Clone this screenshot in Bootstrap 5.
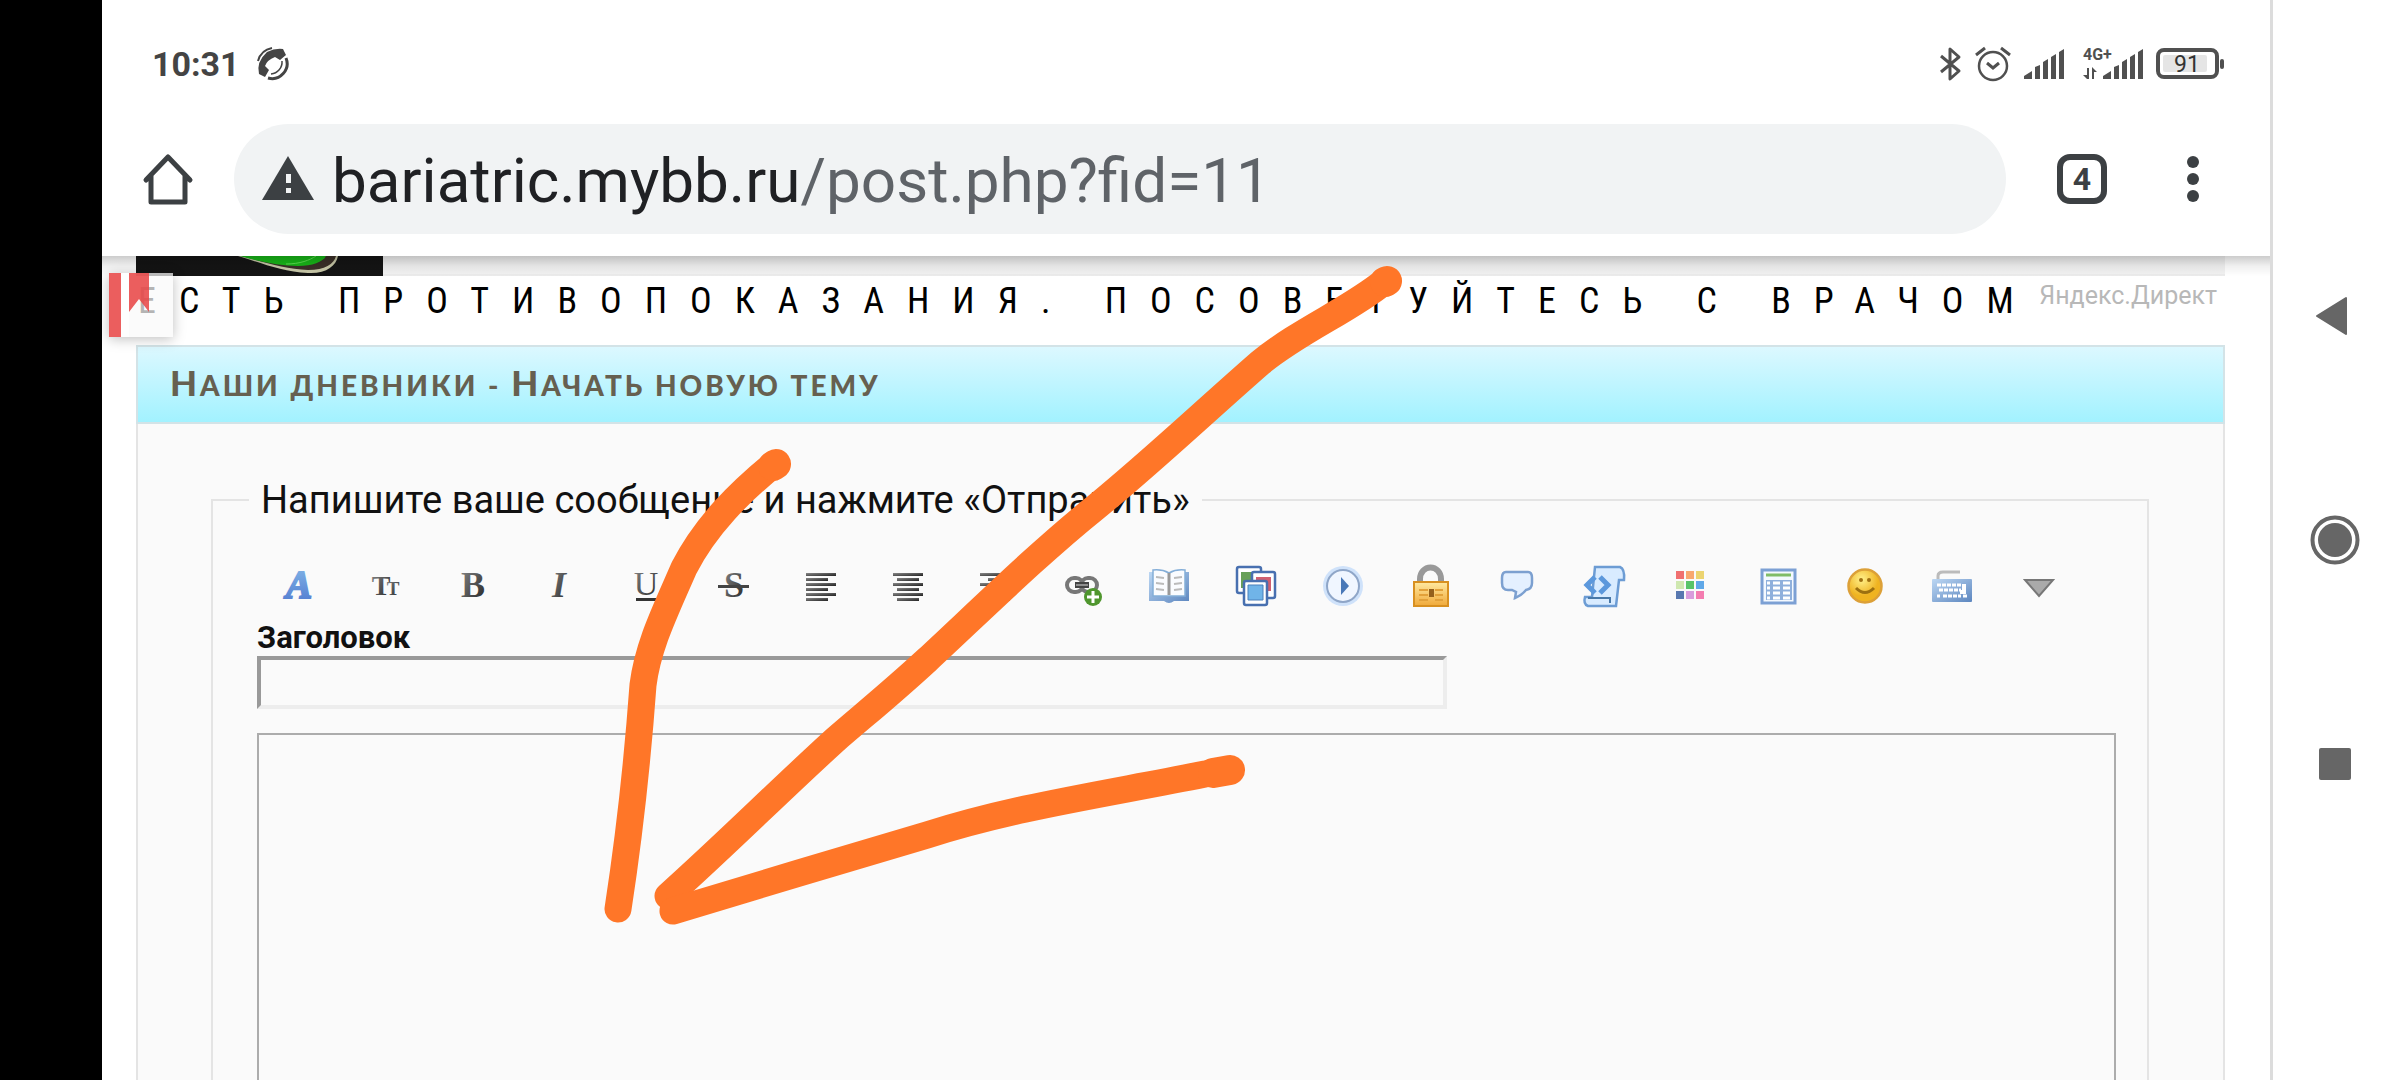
<!DOCTYPE html>
<html lang="ru">
<head>
<meta charset="utf-8">
<meta name="viewport" content="width=device-width, initial-scale=1">
<title>Наши дневники - Начать новую тему</title>
<link href="https://cdn.jsdelivr.net/npm/bootstrap@5.3.0/dist/css/bootstrap.min.css" rel="stylesheet">
<style>
body{font-family:Roboto,sans-serif;color:#111;background:#fff;line-height:1.2}
svg{display:block;flex:none}
button{border:0;background:none;padding:0;color:inherit}
.cutout{width:102px;background:#000}
.sysnav{width:130px;border-left:3px solid #dcdcdc;background:#fff;color:#666;padding-right:4px}
.sysnav button{height:224px}
.statusbar{height:124px;padding:4px 44px 0 50px;color:#444}
.status-icons{gap:13px}
.clock{font-size:34px;font-weight:700}
.omnibar{padding:0 67px 22px 40px;color:#3c4043}
.address{height:110px;background:#f1f3f4;border-radius:55px;margin:0 51px 0 40px;padding:5px 28px 0}
.site-url{font-size:62px;color:#5f6368;text-decoration:none;white-space:nowrap;margin-left:18px}
.site-url b{font-weight:400;color:#202124}
.tabcount{width:50px;height:50px;border:6px solid #3c4043;border-radius:13px;font-size:32px;font-weight:700;line-height:38px}
.forum{padding:0 45px 0 34px}
.topshade{height:20px;background:linear-gradient(rgba(0,0,0,.2),rgba(0,0,0,.06) 50%,rgba(0,0,0,0));left:0;right:0;top:0}
.banner{height:20px;background:#f2f2f2;border-bottom:2px solid #ebebeb}
.advert{height:69px;padding:0 8px 0 2px;color:#000}
.warn{font-family:"Liberation Sans Narrow","Roboto Condensed",Roboto,sans-serif;font-size:36px;line-height:50px;letter-spacing:23px;white-space:nowrap}
.direct{font-size:25px;line-height:40px;color:#b8b8b8}
.saver{left:7px;top:17px;width:64px;height:64px;background:rgba(250,250,250,.72);box-shadow:0 2px 12px rgba(0,0,0,.25)}
.forum-head{height:79px;border:2px solid #d3e3e7;background:linear-gradient(#dcf8ff,#a2f2ff);padding:0 32px 6px;font-family:Lato,sans-serif;font-size:28px;font-weight:900;letter-spacing:3px;text-transform:uppercase;color:#666050;margin:0}
.forum-head span{font-size:35px}
.forum-body{background:#fafafa;border:2px solid #e4e4e4;border-top:0;padding:52px 74px 49px 73px}
fieldset.post{border:2px solid #e4e4e4;padding:27px 31px 80px 44px}
.post legend{float:none;width:auto;font-size:38px;line-height:48px;padding:0 12px;margin:0 0 9px -8px}
.tools{margin:0 0 8px -2px}
.tools button{width:87px;height:52px}
.subject{font-size:31px;font-weight:700;line-height:36px}
.subject-box{width:64%;height:53px;border:4px solid;border-color:#999 #ededed #ededed #999;background:#fafafa;padding:0 8px;font-size:30px}
.message{height:520px;border:2px solid #acacac;background:#fafafa;margin-top:24px;padding:8px;font-size:30px;resize:none}
.scribble{left:0;top:0;pointer-events:none}
</style>
<script src="https://cdn.jsdelivr.net/npm/bootstrap@5.3.0/dist/js/bootstrap.bundle.min.js"></script>
</head>
<body class="vh-100 overflow-hidden position-relative">
<div class="d-flex h-100">
 <div class="cutout flex-shrink-0"></div>
 <div class="flex-grow-1 overflow-hidden">
  <header>
   <div class="statusbar d-flex align-items-center">
    <span class="clock">10:31</span>
    <svg class="ms-3" width="34" height="34" viewBox="-1 -1 34 34" fill="none" stroke="#444"><path d="M1 13Q4 2 15 0" stroke-width="2"/><path d="M29 10A15 15 0 0 1 11 30" stroke-width="3"/><path d="M25 13A12 12 0 0 1 14 26" stroke-width="1.500"/><path d="M10 4Q18 0 26 1L29 7 23 12 18 9Q10 12 8 18L12 22 8 29 2 26Q-1 14 10 4z" fill="#444" stroke="none"/></svg>
    <div class="status-icons ms-auto d-flex align-items-center">
     <svg width="22" height="36" viewBox="0 0 22 36" fill="none" stroke="#505050" stroke-width="3" stroke-linejoin="round"><path d="M1 10l18 15-9 8V3l9 8L1 26"/></svg>
     <svg width="36" height="36" viewBox="0 0 36 36" fill="none" stroke="#505050" stroke-width="2.500"><circle cx="18" cy="20" r="14"/><path d="M12 17l6 5 6-5M1 9l9-7M35 9l-9-7" stroke-width="3"/></svg>
     <svg width="42" height="30" viewBox="0 0 42 30" fill="#505050"><path d="M0 30v-3l8-5v8zM11 30V18l5-2v14zM19 30V13l5-3v20zM27 30V8l5-3v25zM35 30V3l5-3v30z"/></svg>
     <svg width="64" height="36" viewBox="0 0 64 36" fill="#505050"><text x="4" y="14" font-size="16" font-weight="700" font-family="Roboto">4G+</text><path d="M24 33v-3l8-5v8zM35 33V21l5-2v14zM43 33V16l5-3v20zM51 33V11l5-3v25zM59 33V6l5-3v30zM10 22v11h-2l-4-4h4v-7zM13 33V21l5 5h-3v7z"/></svg>
     <svg width="70" height="32" viewBox="0 0 70 32"><rect x="2" y="2" width="59" height="27" rx="6" fill="none" stroke="#505050" stroke-width="4"/><rect x="7" y="7" width="44" height="17" rx="2" fill="#e5e5e5"/><rect x="64" y="11" width="4" height="10" rx="2" fill="#505050"/><text x="31" y="24" text-anchor="middle" font-size="23" fill="#333" font-family="Roboto">91</text></svg>
    </div>
   </div>
   <div class="omnibar d-flex align-items-center">
    <button aria-label="Домой"><svg width="52" height="52" viewBox="0 0 52 52" fill="none" stroke="#3c4043" stroke-width="5" stroke-linejoin="round" stroke-linecap="round"><path d="M4 27L26 4l22 23M9 23v26h34V23"/></svg></button>
    <div class="address flex-grow-1 d-flex align-items-center">
     <svg class="mb-2" width="52" height="44" viewBox="0 0 52 44"><path d="M26 0l26 44H0z" fill="#3c4043"/><path d="M24 18h5v9h-5zM24 32h5v5h-5z" fill="#f1f3f4"/></svg>
     <a class="site-url" href="#"><b>bariatric.mybb.ru</b>/post.php?fid=11</a>
    </div>
    <button class="tabcount" aria-label="Вкладки">4</button>
    <button class="ms-auto" aria-label="Меню"><svg width="96" height="50" viewBox="0 0 96 50" fill="#3c4043"><circle cx="86" cy="8" r="6"/><circle cx="86" cy="25" r="6"/><circle cx="86" cy="42" r="6"/></svg></button>
   </div>
  </header>
  <main class="forum position-relative">
   <div class="banner"><svg width="247" height="20" viewBox="0 0 247 20"><path fill="#141414" d="M0 0h247v20H0z"/><path d="M102 0c24 7 44 16 70 17 18 1 28-7 30-17z" fill="#c8c8a8"/><path d="M106 0c24 7 44 13 66 14 17 0 26-6 28-14z" fill="#3b3028"/><path d="M104 0c20 6 40 10 58 10 14 0 25-4 28-10z" fill="#18b818"/><path d="M150 8c14 0 24-4 30-8" stroke="#5be04f" fill="none"/></svg></div>
   <div class="topshade position-absolute"></div>
   <div class="advert d-flex justify-content-between"><span class="warn">ЕСТЬ ПРОТИВОПОКАЗАНИЯ. ПОСОВЕТУЙТЕСЬ С ВРАЧОМ</span><a class="direct text-decoration-none" href="#">Яндекс.Директ</a></div>
   <div class="saver position-absolute"><svg width="64" height="64" viewBox="0 0 64 64"><path d="M0 0h12v64H0zM20 0h20v39L30 26 20 39z" fill="#e84848" opacity=".88"/><path d="M12 0h8v64h-8z" fill="#fff" opacity=".8"/></svg></div>
   <h1 class="forum-head d-flex align-items-center"><div><span>Н</span>аши дневники - <span>Н</span>ачать новую тему</div></h1>
   <div class="forum-body">
    <form><fieldset class="post">
     <legend>Напишите ваше сообщение и нажмите «Отправить»</legend>
     <div class="tools d-flex" role="toolbar" id="tools"></div>
     <label class="subject d-block" for="subject">Заголовок</label>
     <input class="subject-box d-block" id="subject" type="text">
     <textarea class="message d-block w-100" aria-label="Сообщение"></textarea>
    </fieldset></form>
   </div>
  </main>
 </div>
 <nav class="sysnav flex-shrink-0 d-flex flex-column justify-content-center align-items-center">
  <button aria-label="Назад"><svg width="40" height="40" viewBox="0 0 40 40" fill="#666"><path d="M2 20L31 2v36z" stroke="#666" stroke-width="2" stroke-linejoin="round"/></svg></button>
  <button aria-label="Главный экран"><svg width="50" height="50" viewBox="0 0 50 50"><circle cx="25" cy="25" r="22.500" fill="none" stroke="#666" stroke-width="4"/><circle cx="25" cy="25" r="17" fill="#666"/></svg></button>
  <button aria-label="Недавние"><svg width="32" height="32" viewBox="0 0 32 32"><rect width="32" height="32" rx="2" fill="#666"/></svg></button>
 </nav>
</div>
<svg class="scribble position-absolute" width="2400" height="1080" viewBox="0 0 2400 1080" fill="none" stroke="#ff7628" stroke-width="27" stroke-linecap="round" stroke-linejoin="round"><path d="M774 464C740 492 706 525 684 568C664 614 648 646 643 685C639 740 632 818 618 909"/><path d="M1385 281C1350 310 1300 330 1260 363C1205 411 1150 463 1096 507C1040 552 985 606 927 660C890 694 865 714 835 740C780 790 725 845 668 896"/><path d="M673 911L799 873L927 835C1015 807 1100 795 1205 774L1229 770"/><path d="M1213 773l17-3M776 464l-3 2M1387 281l-2 1" stroke-width="30"/></svg>
<svg width="0" height="0" class="position-absolute"><defs><linearGradient id="ink" x2="1" y2="1"><stop stop-color="#888"/><stop offset="1" stop-color="#222"/></linearGradient><linearGradient id="blu" x2="0" y2="1"><stop stop-color="#84b8e8"/><stop offset="1" stop-color="#5079cf"/></linearGradient><linearGradient id="gold" x2="0" y2="1"><stop stop-color="#ffe9a0"/><stop offset="1" stop-color="#f0a93a"/></linearGradient><radialGradient id="sun" cx=".4" cy=".3"><stop stop-color="#fff08a"/><stop offset="1" stop-color="#efb321"/></radialGradient><linearGradient id="sky" x2="1" y2="1"><stop stop-color="#bcd7f3"/><stop offset="1" stop-color="#5c86bf"/></linearGradient></defs></svg>
<script>
const bars = xs => xs.map(([x, w], i) => `<rect x="${x}" y="${13 + i * 5}" width="${w}" height="3" fill="url(#ink)"/>`).join('');
const letter = (t, x, y, s, extra) => `<text x="${x}" y="${y}" font-size="${s}" font-family="Liberation Serif" fill="url(#ink)" text-anchor="middle" ${extra || ''}>${t}</text>`;
const swatches = ['#f07070','#f8a870','#ecd470','#cfe8b0','#58c468','#60a8e8','#5878b0','#d89cdc','#f47cb0'];
const tools = [
 ['Шрифт', '<text x="24" y="38" font-size="39" font-family="Liberation Serif" font-weight="700" font-style="italic" text-anchor="middle" fill="url(#blu)" stroke="url(#blu)" stroke-width="2">A</text>'],
 ['Размер', letter('T', 19, 35, 28, 'font-weight="700"') + letter('T', 31, 35, 19, 'font-weight="700"')],
 ['Жирный', letter('B', 24, 37, 36, 'font-weight="700"')],
 ['Курсив', letter('I', 23, 37, 36, 'font-weight="700" font-style="italic"')],
 ['Подчёркнутый', letter('U', 23, 35, 34) + '<rect x="13" y="38" width="20" height="3" fill="#333"/>'],
 ['Зачёркнутый', letter('S', 24, 37, 36, 'font-weight="700"') + '<rect x="8" y="25" width="31" height="3" fill="#444"/>'],
 ['Слева', bars([[9,30],[9,22],[9,30],[9,22],[9,30],[9,22]])],
 ['По центру', bars([[9,30],[13,22],[9,30],[13,22],[9,30],[13,22]])],
 ['Справа', bars([[9,30],[17,22],[9,30],[17,22],[9,30],[17,22]])],
 ['Ссылка', '<g fill="none" stroke="#777" stroke-width="4"><rect x="9" y="18" width="16" height="14" rx="7"/><rect x="23" y="18" width="16" height="14" rx="7"/></g><path d="M17 25h14" stroke="#444" stroke-width="6"/><path d="M18 25h12" stroke="#aaa" stroke-width="1.500"/><circle cx="35" cy="37" r="9" fill="#4f962e"/><path d="M35 31v12M29 37h12" stroke="#fff" stroke-width="3"/>'],
 ['Книга', '<path d="M4 12h40v29H29q-5 4-10 0H4z" fill="url(#sky)"/><path d="M8 10q9-1 16 3 7-4 16-3v26H8z" fill="#fafcff" stroke="#84aed8" stroke-width="1.500"/><path d="M24 13v22" stroke="#999" stroke-width="3"/><path d="M11 17l8 1M11 23l8 1M11 29l8 1M29 18l8-1M29 24l8-1M29 30l8-1" stroke="#bbb" stroke-width="2"/>'],
 ['Изображение', '<g fill="#fff" stroke="#4870b0" stroke-width="2.500"><rect x="5" y="7" width="24" height="26" rx="2"/><path d="M9 12h17v16H9z" fill="#68a058" stroke="none"/><rect x="20" y="12" width="23" height="26" rx="2"/></g><path d="M24 17h15v14H24z" fill="#cf5f70"/><rect x="12" y="21" width="23" height="24" rx="2" fill="#fff" stroke="#4870b0" stroke-width="2.500"/><path d="M16 25h15v15H16z" fill="#70b4e8" stroke="#4a80bc"/>'],
 ['Видео', '<circle cx="24" cy="26" r="20" fill="#cfe2fa"/><circle cx="24" cy="26" r="16" fill="#f0f6ff" stroke="#8fa6c8" stroke-width="2"/><path d="M22 17l8 9-8 9z" fill="#4878b8"/>'],
 ['Скрытый текст', '<path d="M14 24V19a10 11 0 0 1 21 0v5" fill="none" stroke="#999" stroke-width="6"/><rect x="8" y="22" width="34" height="24" fill="url(#gold)" stroke="#d89020" stroke-width="2"/><path d="M13 30h9M13 35h9M13 40h9M29 30h8M29 35h8M29 40h8" stroke="#e2a13a" stroke-width="2"/><path d="M23 29h5v8h-5z" fill="#94601c"/>'],
 ['Цитата', '<path d="M13 12h22q4 0 4 6v5q0 6-6 7-4 5-11 8l1-6-4-2h-4q-6 0-6-7v-5q0-6 4-6z" fill="#e4f0ff" stroke="#7ca0d0" stroke-width="2.500"/>'],
 ['Код', '<path d="M15 7h25q5 2 4 13h-5l-3 26H8q-5-2-3-9h7z" fill="#d8ebff" stroke="#6c9cd4" stroke-width="2.500"/><path d="M8 38h22v5" stroke="#4878a8" fill="none" stroke-width="2"/><path d="M15 17l-8 8 8 8M20 17l8 8-8 8" fill="none" stroke="#5c98dc" stroke-width="5"/>'],
 ['Цвет', swatches.map((c, i) => `<rect x="${9 + i % 3 * 10}" y="${11 + Math.floor(i / 3) * 10}" width="8" height="8" fill="${c}"/>`).join('')],
 ['Таблица', '<rect x="8" y="10" width="33" height="33" fill="#f4f9ff" stroke="#7ca0d4" stroke-width="3"/><path d="M12 15h25" stroke="#80bc68" stroke-width="3"/><path d="M12 20h26v20H12z" fill="#8fb0dc"/><path d="M13 23h3M19 23h7M29 23h7M13 28h3M19 28h7M29 28h7M13 33h3M19 33h7M29 33h7M13 38h3M19 38h7M29 38h7" stroke="#fff" stroke-width="3"/>'],
 ['Смайлы', '<circle cx="24" cy="26" r="16.500" fill="url(#sun)" stroke="#dca038" stroke-width="2.500"/><circle cx="20" cy="20" r="2" fill="#a07010"/><circle cx="28" cy="20" r="2" fill="#a07010"/><path d="M15 28q9 9 18 0" fill="none" stroke="#9c7010" stroke-width="3"/>'],
 ['Клавиатура', '<path d="M10 20v-4q0-4 5-4h17" fill="none" stroke="#bbb" stroke-width="3"/><rect x="4" y="19" width="40" height="23" rx="1" fill="url(#sky)"/><path d="M9 25h25M11 30h22M9 36h3M15 36h18M35 36h4" stroke="#fff" stroke-width="3" stroke-dasharray="4 1"/><path d="M36 24v8h-4" stroke="#fff" stroke-width="4" fill="none"/>'],
 ['Ещё', '<path d="M10 20h28L24 36z" fill="#aaa" stroke="#777" stroke-width="2"/>']
];
document.getElementById('tools').innerHTML = tools.map(([n, art]) => `<button type="button" title="${n}" aria-label="${n}"><svg class="mx-auto" width="48" height="52" viewBox="0 0 48 52">${art}</svg></button>`).join('');
</script>
</body>
</html>
